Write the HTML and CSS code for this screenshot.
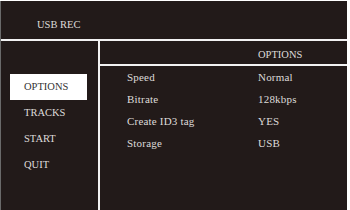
FILE: index.html
```html
<!DOCTYPE html>
<html lang="en">
<head>
  <meta charset="UTF-8">
  <title>USB REC</title>
  <link rel="stylesheet" href="styles.css">
</head>
<body>
  <div class="screen">
    <header class="top-bar">USB REC</header>
    <div class="main">
      <ul class="menu">
        <li class="is-active">OPTIONS</li>
        <li>TRACKS</li>
        <li>START</li>
        <li>QUIT</li>
      </ul>
      <section class="panel">
        <div class="panel-head">OPTIONS</div>
        <div class="settings">
          <span>Speed</span><span>Normal</span>
          <span>Bitrate</span><span>128kbps</span>
          <span>Create ID3 tag</span><span>YES</span>
          <span>Storage</span><span>USB</span>
        </div>
      </section>
    </div>
  </div>
</body>
</html>
```

FILE: styles.css
```css
* {
  box-sizing: border-box;
}
body {
  margin: 0;
  background-color: #fff;
  font-family: "Liberation Serif", serif;
  font-size: 11px;
  color: #dedada;
}

/* whole device screen */
.screen {
  display: flex;
  flex-direction: column;
  width: 347px;
  height: 209px;
  margin-top: 1px;
  background-color: #221a19;
  border-left: 1px solid #6a6a6a;
}

.top-bar {
  height: 40px;
  padding: 18px 0 0 36px;
  border-bottom: 2px solid #f2f2f2;
  font-size: 10.5px;
}

.main {
  flex: 1;
  display: flex;
}

/* left menu */
.menu {
  width: 99px;
  margin: 0;
  padding: 33px 0 0 9px;
  list-style: none;
  border-right: 2px solid #f2f2f2;
}
.menu li {
  width: 77px;
  height: 26px;
  line-height: 26px;
  padding-left: 14px;
  font-size: 10.5px;
}
.menu li.is-active {
  background-color: #fff;
  color: #333;
}

/* options panel */
.panel {
  flex: 1;
}
.panel-head {
  height: 25px;
  padding: 8px 0 0 158px;
  border-bottom: 2px solid #f2f2f2;
  font-size: 10.5px;
}
.settings {
  display: grid;
  grid-template-columns: 131px auto;
  grid-auto-rows: 22px;
  align-items: center;
  padding-left: 27px;
  letter-spacing: 0.2px;
}
```
